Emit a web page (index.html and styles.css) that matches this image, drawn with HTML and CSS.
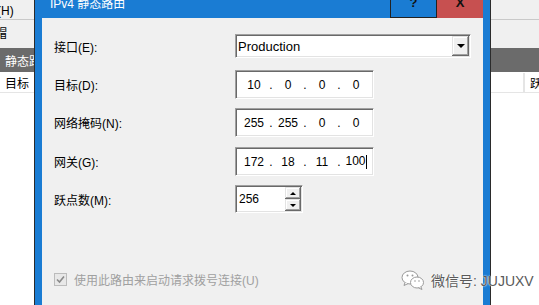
FILE: index.html
```html
<!DOCTYPE html>
<html lang="zh-CN">
<head>
    <meta charset="UTF-8">
    <meta name="viewport" content="width=device-width, initial-scale=1.0">
    <title>IPv4 静态路由</title>
    <link rel="stylesheet" href="styles.css">
</head>
<body>
    <div class="screen">
        <!-- 后面的路由和远程访问窗口 -->
        <div class="app">
            <div class="menubar"><span class="menu-item">帮助(H)</span></div>
            <div class="toolbar"><span class="tool-text">帽</span></div>
            <div class="section-head">静态路由</div>
            <div class="list-head">
                <span class="col col-dest">目标</span>
                <span class="col col-metric">跃点数</span>
            </div>
            <div class="list-body"></div>
        </div>

        <!-- 对话框 -->
        <div class="dialog">
            <div class="titlebar">
                <span class="title">IPv4 静态路由</span>
                <div class="caption-buttons">
                    <span class="cap-btn help">?</span>
                    <span class="cap-btn close">X</span>
                </div>
            </div>
            <div class="client">
                <div class="form">
                    <div class="field field-combo">
                        <span class="label">接口(E):</span>
                        <div class="combo sunken">
                            <span class="combo-text">Production</span>
                            <span class="drop-btn raised"><i class="tri-down"></i></span>
                        </div>
                    </div>
                    <div class="field">
                        <span class="label">目标(D):</span>
                        <div class="ip sunken">
                            <span>10</span><span>.</span><span>0</span><span>.</span><span>0</span><span>.</span><span>0</span>
                        </div>
                    </div>
                    <div class="field">
                        <span class="label">网络掩码(N):</span>
                        <div class="ip sunken">
                            <span>255</span><span>.</span><span>255</span><span>.</span><span>0</span><span>.</span><span>0</span>
                        </div>
                    </div>
                    <div class="field field-gateway">
                        <span class="label">网关(G):</span>
                        <div class="ip sunken">
                            <span>172</span><span>.</span><span>18</span><span>.</span><span>11</span><span>.</span><span>100<i class="caret"></i></span>
                        </div>
                    </div>
                    <div class="field">
                        <span class="label">跃点数(M):</span>
                        <div class="spin sunken">
                            <span class="spin-text">256</span>
                            <div class="spin-btns">
                                <span class="spin-btn raised"><i class="tri-up"></i></span>
                                <span class="spin-btn raised"><i class="tri-down small"></i></span>
                            </div>
                        </div>
                    </div>
                </div>

                <div class="option">
                    <span class="checkbox">
                        <svg width="11" height="11" viewBox="0 0 11 11"><path d="M2 5.5 L4.5 8 L9 2.5" fill="none" stroke="#8a8a8a" stroke-width="1.6"/></svg>
                    </span>
                    <span class="option-text">使用此路由来启动请求拨号连接(U)</span>
                </div>
            </div>
        </div>

        <div class="watermark">
            <svg width="24" height="20" viewBox="0 0 24 20">
                <ellipse cx="9" cy="7.5" rx="8" ry="6.5" fill="#fff" stroke="#9a9a9a" stroke-width="1"/>
                <path d="M4 12.5 L3 15.5 L7 13.6" fill="#fff" stroke="#9a9a9a" stroke-width="1"/>
                <ellipse cx="16" cy="12.5" rx="6.5" ry="5.5" fill="#fff" stroke="#9a9a9a" stroke-width="1"/>
                <path d="M20 17 L21 19.5 L17.5 17.9" fill="#fff" stroke="#9a9a9a" stroke-width="1"/>
                <circle cx="6.5" cy="5.5" r="1" fill="#9a9a9a"/>
                <circle cx="11.5" cy="5.5" r="1" fill="#9a9a9a"/>
                <circle cx="14" cy="11" r="0.8" fill="#9a9a9a"/>
                <circle cx="18" cy="11" r="0.8" fill="#9a9a9a"/>
            </svg>
            <span class="watermark-text">微信号: JUJUXV</span>
        </div>
    </div>
</body>
</html>
```

FILE: styles.css
```css
* {
    margin: 0;
    padding: 0;
    box-sizing: border-box;
}

body {
    font-family: "Liberation Sans", "Noto Sans CJK SC", sans-serif;
    font-size: 12px;
    background-color: #ffffff;
    overflow: hidden;
}

.screen {
    position: relative;
    width: 539px;
    height: 305px;
    overflow: hidden;
}

/* 后面的窗口 */
.app {
    display: flex;
    flex-direction: column;
    height: 100%;
    background-color: #ffffff;
}

.menubar {
    height: 20px;
    background-color: #f0f0f0;
    border-bottom: 1px solid #c9c9c9;
    display: flex;
    align-items: center;
}

.menu-item {
    margin-left: -27px;
    white-space: nowrap;
}

.toolbar {
    height: 28px;
    background-color: #f0f0f0;
    padding-top: 4px;
}

.tool-text {
    display: inline-block;
    margin-left: -5px;
}

.section-head {
    height: 24px;
    background-color: #6b6b6b;
    color: #ffffff;
    padding-left: 5px;
    display: flex;
    align-items: center;
    white-space: nowrap;
}

.list-head {
    height: 21px;
    display: flex;
    background-color: #ffffff;
    border-bottom: 1px solid #e5e5e5;
    border-top: 1px solid #ffffff;
}

.col {
    display: flex;
    align-items: center;
    white-space: nowrap;
}

.col-dest {
    flex: 1;
    padding-left: 5px;
}

.col-metric {
    width: 16px;
    padding-left: 5px;
    border-left: 2px solid #e5e5e5;
}

.list-body {
    flex: 1;
}

/* 对话框 */
.dialog {
    position: absolute;
    left: 34px;
    top: -13px;
    bottom: -20px;
    width: 457px;
    background-color: #1a7cd3;
    border-left: 1px solid #2b2b2b;
    border-right: 1px solid #2b2b2b;
    padding: 0 7px;
    display: flex;
    flex-direction: column;
}

.titlebar {
    height: 31px;
    display: flex;
    align-items: center;
}

.title {
    color: #ffffff;
    padding-left: 8px;
}

.caption-buttons {
    margin-left: auto;
    align-self: stretch;
    display: flex;
}

.cap-btn {
    display: flex;
    align-items: center;
    justify-content: center;
    font-size: 13px;
    font-weight: bold;
    color: #111111;
}

.help {
    width: 47px;
    border: 1px solid #222222;
    border-top: none;
    background-color: #1a7cd3;
}

.close {
    width: 46px;
    background-color: #c75050;
}

.client {
    flex: 1;
    background-color: #f0f0f0;
    padding: 16px 12px 0 12px;
}

.form {
    display: flex;
    flex-direction: column;
}

.field {
    display: flex;
    align-items: center;
}

.field + .field {
    margin-top: 9px;
}

.field-combo {
    margin-bottom: 3px;
}

.field + .field-gateway {
    margin-top: 10px;
}

.label {
    width: 181px;
    white-space: nowrap;
}

.sunken {
    background-color: #ffffff;
    border: 1px solid;
    border-color: #a0a0a0 #ffffff #ffffff #a0a0a0;
    box-shadow: inset 1px 1px 0 #696969, inset -1px -1px 0 #e3e3e3;
    padding: 1px;
}

.raised {
    background-color: #f0f0f0;
    box-shadow: inset -1px -1px 0 #696969, inset 1px 1px 0 #e3e3e3, inset -2px -2px 0 #a0a0a0, inset 2px 2px 0 #ffffff;
    display: flex;
    align-items: center;
    justify-content: center;
}

.combo {
    width: 236px;
    height: 24px;
    display: flex;
    align-items: center;
}

.combo-text {
    flex: 1;
    padding-left: 1px;
    font-size: 13px;
}

.drop-btn {
    width: 17px;
    height: 100%;
}

.tri-down {
    width: 0;
    height: 0;
    border-left: 4px solid transparent;
    border-right: 4px solid transparent;
    border-top: 4px solid #000000;
}

.tri-down.small {
    border-left-width: 3px;
    border-right-width: 3px;
    border-top-width: 3px;
}

.tri-up {
    width: 0;
    height: 0;
    border-left: 3px solid transparent;
    border-right: 3px solid transparent;
    border-bottom: 3px solid #000000;
}

.ip {
    width: 139px;
    height: 29px;
    padding-left: 4px;
    display: grid;
    grid-template-columns: 28px 6px 28px 6px 28px 6px 28px;
    align-items: center;
    text-align: center;
}

.caret {
    display: inline-block;
    width: 1px;
    height: 14px;
    background-color: #000000;
    vertical-align: middle;
}

.spin {
    width: 68px;
    height: 28px;
    display: flex;
    align-items: stretch;
}

.spin-text {
    flex: 1;
    padding-left: 2px;
    display: flex;
    align-items: center;
}

.spin-btns {
    width: 16px;
    display: flex;
    flex-direction: column;
}

.spin-btn {
    flex: 1;
}

.option {
    margin-top: 58px;
    display: flex;
    align-items: center;
    gap: 7px;
}

.checkbox {
    width: 13px;
    height: 13px;
    border: 1px solid #bcbcbc;
    background-color: #e8e8e8;
    display: flex;
}

.option-text {
    color: #a0a0a0;
    white-space: nowrap;
}

/* 水印 */
.watermark {
    position: absolute;
    left: 401px;
    top: 270px;
    display: flex;
    align-items: center;
    gap: 6px;
}

.watermark-text {
    font-size: 14px;
    color: #5a5a5a;
    text-shadow: 0 0 2px #ffffff, 0 0 1px #ffffff;
    white-space: nowrap;
}
```
